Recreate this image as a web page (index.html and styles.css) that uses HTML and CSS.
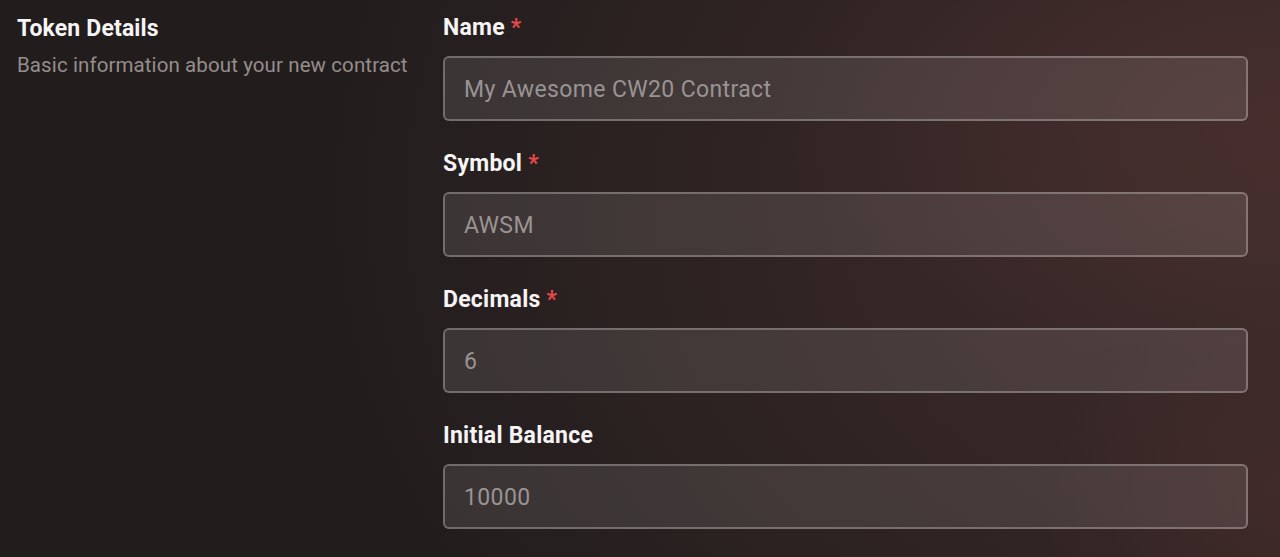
FILE: index.html
```html
<!DOCTYPE html>
<html lang="en">
<head>
<meta charset="utf-8">
<title>Token Details</title>
<link rel="stylesheet" href="styles.css">
</head>
<body>
<main class="page">
  <section class="intro">
    <h2 class="intro-title">Token Details</h2>
    <p class="intro-sub">Basic information about your new contract</p>
  </section>
  <form class="fields">
    <div class="field">
      <label class="label" for="name">Name <span class="req">*</span></label>
      <input class="input" id="name" type="text" placeholder="My Awesome CW20 Contract">
    </div>
    <div class="field">
      <label class="label" for="symbol">Symbol <span class="req">*</span></label>
      <input class="input" id="symbol" type="text" placeholder="AWSM">
    </div>
    <div class="field">
      <label class="label" for="decimals">Decimals <span class="req">*</span></label>
      <input class="input" id="decimals" type="text" placeholder="6">
    </div>
    <div class="field">
      <label class="label" for="balance">Initial Balance</label>
      <input class="input" id="balance" type="text" placeholder="10000">
    </div>
  </form>
</main>
</body>
</html>
```

FILE: styles.css
```css
html, body {
  margin: 0;
  height: 100%;
}

body {
  font-family: Roboto, "Liberation Sans", sans-serif;
  background:
    radial-gradient(ellipse 520px 260px at 1300px 120px, rgba(80, 50, 48, 0.5), rgba(80, 50, 48, 0) 100%),
    radial-gradient(ellipse 260px 200px at 1300px 500px, rgba(80, 48, 46, 0.45), rgba(80, 48, 46, 0) 100%),
    radial-gradient(ellipse 950px 750px at 1280px 200px, #3e2c2b 0%, #362726 35%, rgba(34, 29, 29, 0) 100%),
    #221d1d;
  color: #f4f2f2;
  overflow: hidden;
}

.page {
  display: flex;
  padding: 0 32px 0 17px;
}

.intro {
  width: 426px;
  flex: none;
  padding-top: 15px;
}

.intro-title {
  margin: 0;
  font-size: 23px;
  line-height: 28px;
  font-weight: 700;
  letter-spacing: 0.15px;
  color: #f6f4f4;
}

.intro-sub {
  margin: 8px 0 0;
  font-size: 20.5px;
  line-height: 28px;
  letter-spacing: 0.1px;
  color: #958d8c;
}

.fields {
  flex: 1;
  display: flex;
  flex-direction: column;
  gap: 29px;
  padding-top: 14px;
}

.field {
  display: flex;
  flex-direction: column;
  gap: 14px;
}

.label {
  font-size: 23px;
  line-height: 28px;
  font-weight: 700;
  letter-spacing: 0.25px;
  color: #f6f4f4;
}

.req {
  color: #e5484d;
  font-weight: 700;
}

.input {
  box-sizing: border-box;
  width: 100%;
  height: 65px;
  margin: 0;
  padding: 2px 19px 0;
  border: 2px solid rgba(255, 255, 255, 0.28);
  border-radius: 6px;
  background: rgba(255, 255, 255, 0.1);
  font-family: Roboto, "Liberation Sans", sans-serif;
  font-size: 23px;
  letter-spacing: 0.37px;
  color: #f4f2f2;
  outline: none;
}

.input::placeholder {
  color: #9a9393;
  opacity: 1;
}
```
